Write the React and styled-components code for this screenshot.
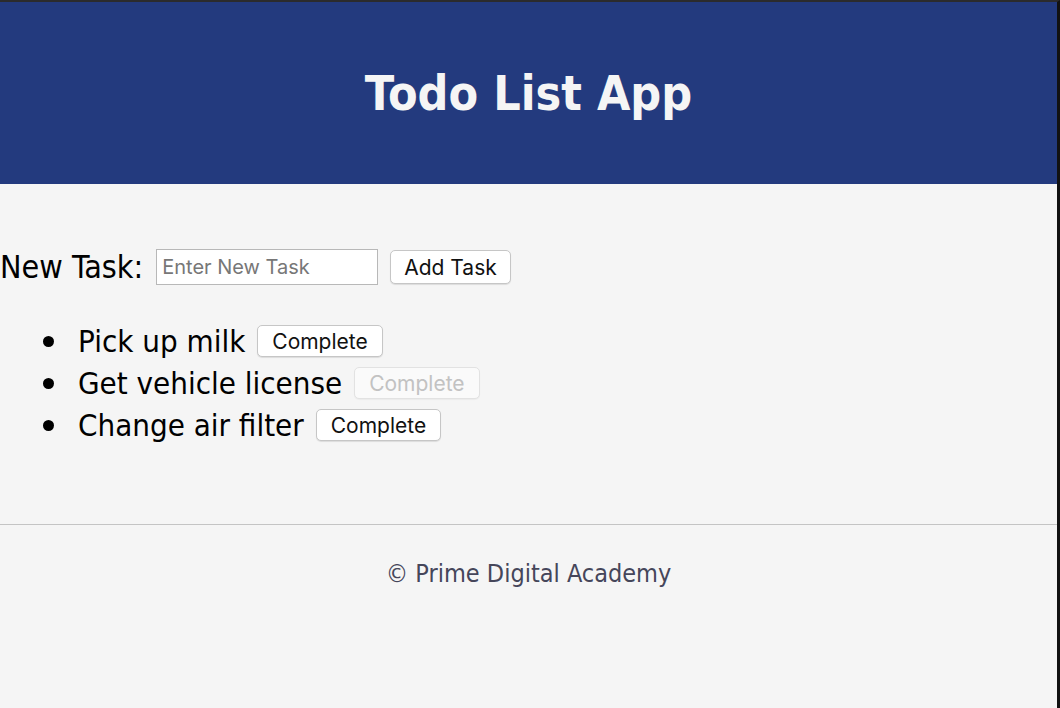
import React from 'react'
import styled, { createGlobalStyle } from 'styled-components'

const GlobalStyle = createGlobalStyle`
  html, body {
    margin: 0;
    padding: 0;
    background: #f5f5f5;
  }
  body {
    font-family: 'DejaVu Sans Condensed', 'DejaVu Sans', sans-serif;
  }
`

const Frame = styled.div`
  box-sizing: border-box;
  height: 708px;
  border-top: 2px solid #2b2b2d;
  border-right: 3px solid #121212;
  background: #f5f5f5;
  display: flex;
  flex-direction: column;
  overflow: hidden;
`

const Header = styled.header`
  height: 182px;
  background: #233a7e;
  display: flex;
  align-items: center;
  justify-content: center;
`

const Title = styled.h1`
  margin: 0;
  color: #f5f5f5;
  font-size: 48px;
  font-weight: bold;
`

const Main = styled.main`
  height: 340px;
  padding-top: 65px;
  box-sizing: border-box;
`

const FormRow = styled.div`
  display: flex;
  align-items: center;
  height: 36px;
`

const Label = styled.label`
  font-size: 32px;
  color: #000;
  margin-right: 13px;
`

const Input = styled.input`
  box-sizing: border-box;
  width: 222px;
  height: 36px;
  border: 1px solid #b8b8b8;
  background: #fff;
  padding: 0 5px;
  font-family: Inter, 'Liberation Sans', sans-serif;
  font-size: 20px;
  margin-right: 12px;
  &::placeholder {
    color: #777;
  }
`

const Button = styled.button`
  box-sizing: border-box;
  height: ${(p) => p.$height || 32}px;
  padding: 0 ${(p) => p.$pad || 14}px;
  font-family: Inter, 'Liberation Sans', sans-serif;
  font-size: 21px;
  color: ${(p) => (p.disabled ? '#c2c2c2' : '#111')};
  background: ${(p) => (p.disabled ? '#fafafa' : '#fff')};
  border: 1px solid ${(p) => (p.disabled ? '#e2e2e2' : '#c6c6c6')};
  border-radius: 5px;
  box-shadow: 0 1px 1px rgba(0, 0, 0, ${(p) => (p.disabled ? 0.04 : 0.1)});
`

const TaskList = styled.ul`
  list-style: none;
  margin: 35px 0 0;
  padding: 0;
`

const TaskItem = styled.li`
  display: flex;
  align-items: center;
  height: 42px;
  font-size: 31px;
  color: #000;
`

const Bullet = styled.span`
  width: 11px;
  height: 11px;
  border-radius: 50%;
  background: #000;
  margin-left: 43px;
  margin-right: 24px;
  flex-shrink: 0;
`

const TaskName = styled.span`
  margin-right: 12px;
`

const Footer = styled.footer`
  border-top: 1px solid #c4c4c4;
  padding-top: 34px;
  text-align: center;
  font-size: 25px;
  color: #45465a;
`

const tasks = [
  { name: 'Pick up milk', done: false },
  { name: 'Get vehicle license', done: true },
  { name: 'Change air filter', done: false },
]

export default function App() {
  return (
    <>
      <GlobalStyle />
      <Frame>
        <Header>
          <Title>Todo List App</Title>
        </Header>
        <Main>
          <FormRow>
            <Label>New Task:</Label>
            <Input placeholder='Enter New Task' />
            <Button $height={34} $pad={13}>
              Add Task
            </Button>
          </FormRow>
          <TaskList>
            {tasks.map((task) => (
              <TaskItem key={task.name}>
                <Bullet />
                <TaskName>{task.name}</TaskName>
                <Button disabled={task.done}>Complete</Button>
              </TaskItem>
            ))}
          </TaskList>
        </Main>
        <Footer>© Prime Digital Academy</Footer>
      </Frame>
    </>
  )
}
